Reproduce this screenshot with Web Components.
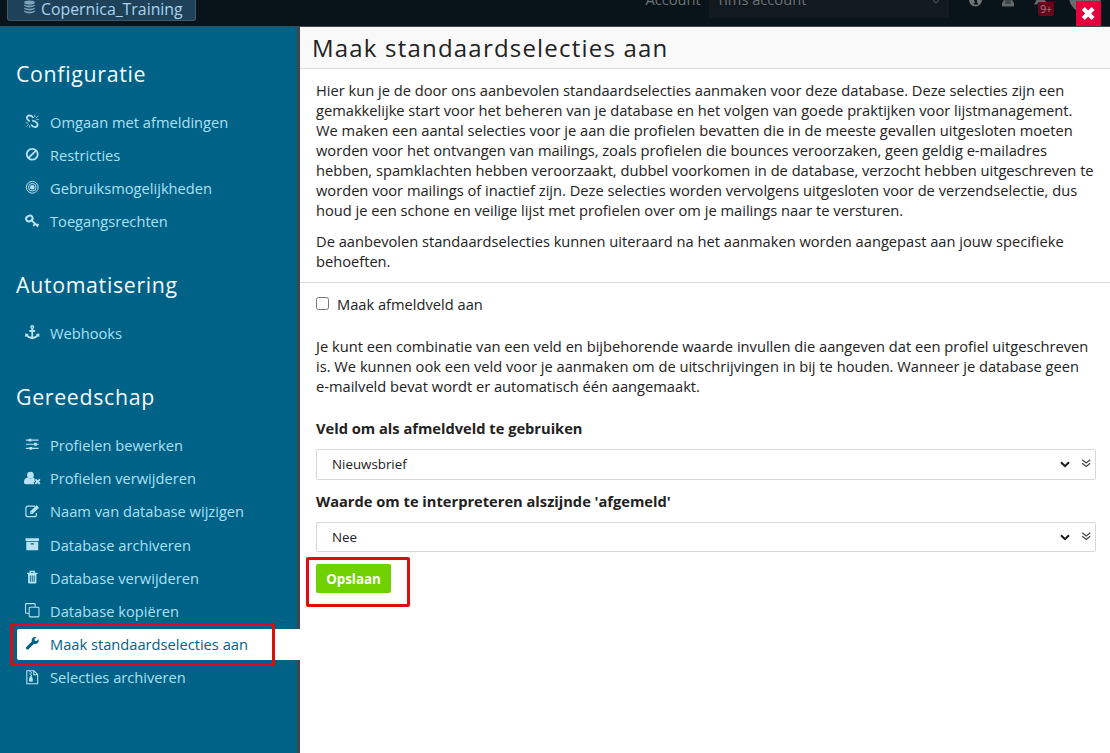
<!DOCTYPE html>
<html lang="nl"><head><meta charset="utf-8"><title>Maak standaardselecties aan</title>
<style>
html,body{margin:0;height:100%;overflow:hidden}
body{font:14.667px/20px "Open Sans","Noto Sans",sans-serif;color:#222;background:#fff}
</style></head><body>
<app-shell>
  <top-bar slot="top"></top-bar>
  <side-menu slot="side">
    <menu-group heading="Configuratie">
      <menu-item icon="unlink">Omgaan met afmeldingen</menu-item>
      <menu-item icon="ban">Restricties</menu-item>
      <menu-item icon="target">Gebruiksmogelijkheden</menu-item>
      <menu-item icon="key">Toegangsrechten</menu-item>
    </menu-group>
    <menu-group heading="Automatisering">
      <menu-item icon="anchor">Webhooks</menu-item>
    </menu-group>
    <menu-group heading="Gereedschap">
      <menu-item icon="sliders">Profielen bewerken</menu-item>
      <menu-item icon="userx">Profielen verwijderen</menu-item>
      <menu-item icon="edit">Naam van database wijzigen</menu-item>
      <menu-item icon="archive">Database archiveren</menu-item>
      <menu-item icon="trash">Database verwijderen</menu-item>
      <menu-item icon="copy">Database kopiëren</menu-item>
      <menu-item icon="wrench" active>Maak standaardselecties aan</menu-item>
      <menu-item icon="zip">Selecties archiveren</menu-item>
    </menu-group>
  </side-menu>
  <dialog-page heading="Maak standaardselecties aan">
    <text-block slot="intro">Hier kun je de door ons aanbevolen standaardselecties aanmaken voor deze database. Deze selecties zijn een<br>gemakkelijke start voor het beheren van je database en het volgen van goede praktijken voor lijstmanagement.<br>We maken een aantal selecties voor je aan die profielen bevatten die in de meeste gevallen uitgesloten moeten<br>worden voor het ontvangen van mailings, zoals profielen die bounces veroorzaken, geen geldig e-mailadres<br>hebben, spamklachten hebben veroorzaakt, dubbel voorkomen in de database, verzocht hebben uitgeschreven te<br>worden voor mailings of inactief zijn. Deze selecties worden vervolgens uitgesloten voor de verzendselectie, dus<br>houd je een schone en veilige lijst met profielen over om je mailings naar te versturen.</text-block>
    <text-block slot="intro">De aanbevolen standaardselecties kunnen uiteraard na het aanmaken worden aangepast aan jouw specifieke<br>behoeften.</text-block>
    <check-field>Maak afmeldveld aan</check-field>
    <text-block>Je kunt een combinatie van een veld en bijbehorende waarde invullen die aangeven dat een profiel uitgeschreven<br>is. We kunnen ook een veld voor je aanmaken om de uitschrijvingen in bij te houden. Wanneer je database geen<br>e-mailveld bevat wordt er automatisch één aangemaakt.</text-block>
    <select-field label="Veld om als afmeldveld te gebruiken" style="margin-top:22px;--h:31px">Nieuwsbrief</select-field>
    <select-field label="Waarde om te interpreteren alszijnde 'afgemeld'" style="margin-top:11px;--h:30px">Nee</select-field>
    <save-button>Opslaan</save-button>
  </dialog-page>
</app-shell>
<mark-box style="left:10px;top:623px;width:265px;height:43px"></mark-box>
<mark-box style="left:306px;top:557px;width:104px;height:50px"></mark-box>
<script>
const S='fill="none" stroke="currentColor"';
const ICONS={
 unlink:`<g ${S} stroke-width="1.9"><path d="M9.300 4.300Q7.500 1.500 5 1.500 2.200 1.800 2 4.300 2.200 6.600 5.300 8"/><path d="M6.700 11.700Q8.500 14.500 11 14.500 13.800 14.200 14 11.700 13.800 9.400 10.700 8L8 7.300"/></g><g ${S} stroke-width=".8"><path d="M10.800.5v3M12 4.700l2.700-2.700M12.300 6.200h3M5.200 15.500v-3M4 11.300l-2.700 2.700M3.700 9.800h-3"/></g>`,
 ban:`<circle cx="8" cy="8" r="6" ${S} stroke-width="2"/><path d="M3.900 12.100l8.200-8.200" ${S} stroke-width="2"/>`,
 target:`<g ${S} stroke-width="1.100"><circle cx="8" cy="8" r="6.500"/><circle cx="8" cy="8" r="4.200"/></g><circle cx="8" cy="8" r="2.500" fill="currentColor"/>`,
 key:`<g ${S} stroke-width="2.200"><ellipse cx="4.800" cy="5" rx="3.700" ry="3" transform="rotate(-25 4.800 5)"/><path d="M7.300 7.200l7.200 6.600M11.200 10.700l-2 2.300M14.900 11l-2 2.200" stroke-width="2"/></g>`,
 anchor:`<circle cx="8" cy="2.300" r="1.500" ${S} stroke-width="1.500"/><path d="M8 3.600v10.500M4.800 6.600h6.400" ${S} stroke-width="2"/><path d="M.2 9.500l4 .3-1.200 1.200Q4.500 13 7 13h2q2.500 0 4-2l-1.200-1.200 4-.3v4l-1.200-1Q12 15.600 8 15.800 4 15.600 1.400 12.500l-1.200 1z" fill="currentColor"/>`,
 sliders:`<path d="M1 3.500h14M1 8h14M1 12.500h14" ${S} stroke-width="1.300"/><path d="M4 1.900h3v3.200H4zM10 6.400h3v3.200h-3zM5 10.900h3v3.200H5z" fill="currentColor"/>`,
 userx:`<circle cx="6" cy="4.600" r="3.700" fill="currentColor"/><path d="M3 7.300Q6 9.800 9 7.300 10.400 7.600 10.800 9L10 10l1.200 1.400L9.500 13l1 1.500H1Q-1.200 14.500-1.200 12.300-.9 7.800 3 7.300z" fill="currentColor"/><path d="M11.400 9.200l5 5m0-5l-5 5" ${S} stroke-width="2.200"/>`,
 edit:`<path d="M11.200 2.400H3.200Q1 2.400 1 4.600v7.200Q1 14 3.200 14h7.200q2.200 0 2.200-2.200V9.800" ${S} stroke-width="1.300"/><path d="M5.700 8.400L12.800 1.300l2.700 2.700L8.400 11.100H5.700z" fill="currentColor"/><path d="M7 9l1 1" stroke="#006287" stroke-width=".7"/>`,
 archive:`<path d="M.6 1.300h14.800v3H.6zM1.400 5.200h13.200v9.300H1.400zM6.200 6.800v1.400h3.600V6.800z" fill="currentColor" fill-rule="evenodd"/>`,
 trash:`<path d="M5.800 3V1.500h4.400V3M2.200 3.600h11.600" ${S} stroke-width="1.400"/><path d="M3.400 4h9.200v9.500q0 1.500-1.400 1.500H4.800q-1.400 0-1.400-1.500zM5.400 6v7h1V6zM7.500 6v7h1V6zM9.600 6v7h1V6z" fill="currentColor" fill-rule="evenodd"/>`,
 copy:`<g ${S} stroke-width="1.150"><rect x="4.600" y="4.700" width="10.800" height="10.600" rx="1"/><path d="M4.500 11.300H1.300Q.6 11.300.6 10.500V1.500Q.6.700 1.400.700h9q.8 0 .8.800v3"/></g>`,
 wrench:`<path d="M1.400 12.100L7.500 6.100Q6.700 3.700 8.600 2 10.400.5 12.900 1.200L10.500 3.400l.4 1.800 1.900.4 2.300-2.200q.7 2.600-1 4.300-1.800 1.700-4.200.9L3.900 14.600q-1.200.9-2.300-.1-1.200-1.200-.2-2.400z" fill="currentColor"/>`,
 zip:`<path d="M2 .8h7.800L14 5v10.200H2zM9.700.8V5.200H14" ${S} stroke-width="1.200"/><path d="M5 1h1.400v1.400H5zM6.400 2.400h1.400v1.400H6.400zM5 3.800h1.400v1.400H5zM6.400 5.200h1.400v1.400H6.400zM5.400 7h2.200l1.200 4q.2 2-2.300 2.100Q4 13 4.300 11z" fill="currentColor"/>`,
 db:`<ellipse cx="8" cy="2.500" rx="6.500" ry="2.600" fill="currentColor"/><path d="M1.500 4.800q6.500 3 13 0v1.900q-6.500 3.600-13 0zM1.500 8.600q6.500 3 13 0v1.900q-6.500 3.600-13 0zM1.500 12.400q6.500 3 13 0v1.900q-6.500 3.600-13 0z" fill="currentColor"/>`
};
const def=(name,css,html)=>customElements.define(name,class extends HTMLElement{
 constructor(){super();this.attachShadow({mode:'open'}).innerHTML=`<style>:host{display:block;box-sizing:border-box}*{box-sizing:border-box}${css}</style>${typeof html==='function'?html(this):html}`}
});
def('ui-icon','svg{display:block;width:100%;height:100%;overflow:visible}',e=>`<svg viewBox="0 0 16 16">${ICONS[e.getAttribute('name')]}</svg>`);
def('app-shell',':host{display:grid;grid-template:26px 727px/300px 1fr;height:753px;overflow:hidden}.t{grid-column:1/3}','<div class="t"><slot name="top"></slot></div><slot name="side"></slot><slot></slot>');
def('top-bar',`:host{display:flex;height:26px;background:#08131a;color:#6d7275;position:relative}
 .tab{display:flex;width:189px;height:21px;margin-left:7px;padding:0 0 0 15px;background:#1f425b;border:1px solid #42596a;border-top:0;border-radius:0 0 3px 3px;color:#a9d3ee;font-size:15.850px;line-height:18px;white-space:nowrap}
 .tab ui-icon{width:13px;height:14px;margin-right:5px;color:#7ba3bb}
 .acc{margin:-11px 8px 0 449.500px}
 .sel{display:flex;width:240px;height:18px;background:#12191f;padding:0 9px 0 10px;justify-content:space-between}
 .sel span{margin-top:-11px}.sel svg{margin:-1px 0 0}
 .ic{display:block;margin-left:20px;overflow:visible}
 .badge{position:absolute;left:1038px;top:2px;width:16px;height:14px;border-radius:2px;background:#65061b;color:#9b8a8e;font-size:10.500px;line-height:14px;text-align:center;letter-spacing:-.2px}
 .av{position:absolute;left:1069px;top:-19px;width:32px;height:32px;border-radius:50%;background:#6b6b6b}
 .x{position:absolute;left:1076px;top:1px;width:25px;height:25px;background:#e4003c}
 .x svg{display:block}`,
 `<div class="tab"><ui-icon name="db"></ui-icon>Copernica_Training</div><div class="acc">Account</div><div class="sel"><span>nms account</span><svg width="8" height="6"><path d="M1 1l3 3 3-3" fill="none" stroke="#3d4449" stroke-width="1.500"/></svg></div>
 <svg class="ic" width="13" height="7"><path d="M0 0a6.500 6.500 0 0 0 13 0z" fill="#707476"/><path d="M5 0h3v3h1v1.500H4.800V3h1V1H5z" fill="#08131a"/></svg>
 <svg class="ic" width="12" height="7"><path d="M2 0h8l2 3v3.500H0V3z" fill="#62686c"/><path d="M4 0v4m2-4v4m2-4v4" stroke="#20282c"/></svg>
 <svg class="ic" width="14" height="7"><path d="M2.500 0h8l2 2H5L3 4.500H0z" fill="#62686c"/></svg>
 <span class="badge">9+</span><i class="av"></i><div class="x"><svg width="25" height="25"><path d="M7.300 7.500l9.800 10m0-10l-9.800 10" stroke="#fff" stroke-width="4.300"/></svg></div>`);
def('side-menu',':host{background:#006287;border-right:3px solid #41454c;border-top:1px solid #35515f;padding-top:32px}','<slot></slot>');
def('menu-group',':host{margin-bottom:33.500px}h2{margin:0 0 17.200px 16px;font-size:21.333px;font-weight:400;line-height:30px;letter-spacing:.67px;color:#f4fbff;white-space:nowrap}',e=>`<h2>${e.getAttribute('heading')}</h2><slot></slot>`);
def('menu-item',`:host{display:flex;align-items:center;height:31.200px;margin:0 -3px 2px 17px;padding-left:8px;color:#abe0f8;white-space:nowrap;position:relative}
 :host([active]){background:#fff;color:#006287;border-radius:2px 0 0 2px}ui-icon{width:14.500px;height:14.500px;margin:-1px 10.500px 0 0;flex:none}:host(:not([active])) ui-icon{color:#b9e3f5}`,e=>`<ui-icon name="${e.getAttribute('icon')}"></ui-icon><slot></slot>`);
def('dialog-page',`:host{background:#fff;border-top:1px solid #45474f}
 h1{margin:0;height:42px;padding-left:12px;background:#f9f9f9;border-bottom:1px solid #dcdcdc;font-size:24px;font-weight:400;line-height:41px;letter-spacing:1.200px}
 .intro{display:flex;flex-direction:column;gap:11px;height:214px;padding:11px 0 0 16px;border-bottom:1px solid #dcdcdc}.body{padding:11px 14px 0 16px}`,
 e=>`<h1>${e.getAttribute('heading')}</h1><div class="intro"><slot name="intro"></slot></div><div class="body"><slot></slot></div>`);
def('text-block',':host{white-space:nowrap}','<slot></slot>');
def('check-field',':host{display:flex;height:20px;margin-bottom:22px}input{margin:3px 8px 0 0;width:13px;height:13px}','<input type="checkbox"><slot></slot>');
def('select-field',`b{display:block;margin-bottom:11px}.f{display:flex;align-items:flex-start;height:var(--h);border:1px solid #d8d8d8;border-radius:2px;padding:0 2px 0 15px;font-size:13.333px;line-height:28px}svg{margin:8px 0 0 auto}`,
 e=>`<b>${e.getAttribute('label')}</b><div class="f"><span><slot></slot></span><svg width="34" height="12"><path d="M2 4.200l4 4 4-4" fill="none" stroke="#1a1a1a" stroke-width="2"/><path d="M23.200 1.800l4 3.200 4-3.200M23.200 5.300l4 3.200 4-3.200" fill="none" stroke="#444" stroke-width="1.200"/></svg></div>`);
def('save-button',':host{margin-top:12px}button{display:block;width:75px;height:29px;padding:2px 0 0;border:0;border-radius:2px;background:#6fd100;color:#fff;font:bold 13.333px/27px "Open Sans",sans-serif}','<button><slot></slot></button>');
def('mark-box',':host{position:absolute;border:3px solid #e00b10;border-radius:2px}','');
</script></body></html>
